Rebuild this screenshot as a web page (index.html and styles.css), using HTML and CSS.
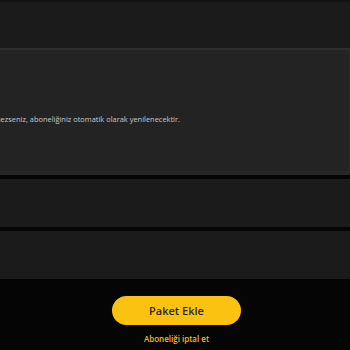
FILE: index.html
```html
<!DOCTYPE html>
<html lang="tr">
<head>
<meta charset="utf-8">
<link rel="stylesheet" href="styles.css">
</head>
<body>
<div class="page">
  <div class="top"></div>
  <div class="card">
    <div class="note-wrap">
      <p class="note">Eğer aboneliğinizi iptal etmezseniz, aboneliğiniz otomatik olarak yenilenecektir.</p>
    </div>
  </div>
  <div class="row"></div>
  <div class="row"></div>
  <div class="actions">
    <button class="primary">Paket Ekle</button>
    <a class="cancel">Aboneliği iptal et</a>
  </div>
</div>
</body>
</html>
```

FILE: styles.css
```css
html, body {
  margin: 0;
  padding: 0;
  background: #050505;
  font-family: "Open Sans", "Noto Sans", sans-serif;
  overflow: hidden;
}
.page {
  width: 350px;
  height: 350px;
  display: flex;
  flex-direction: column;
}
.top {
  height: 46px;
  background: #1b1b1b;
  border-top: 2px solid #131313;
}
.card {
  height: 57px;
  background: #232323;
  border-top: 2px solid #2e2e2e;
  border-bottom: 4px solid #272727;
  border-right: 1px solid #2c2c2c;
  padding-top: 64px;
}
.note-wrap {
  width: 180px;
  display: flex;
  justify-content: flex-end;
}
.note {
  margin: 0;
  white-space: nowrap;
  font-size: 7.45px;
  line-height: 11px;
  color: #c9c9c9;
  flex-shrink: 0;
}
.row {
  height: 48px;
  background: #1b1b1b;
  margin-top: 4px;
}
.actions {
  display: flex;
  flex-direction: column;
  align-items: center;
  padding-top: 17px;
  padding-left: 3px;
}
.primary {
  width: 129px;
  height: 29px;
  border: 0;
  border-radius: 15px;
  background: #fcc212;
  color: #262626;
  font-family: "Open Sans", "Noto Sans", sans-serif;
  font-weight: 600;
  font-size: 11px;
  padding: 0;
}
.cancel {
  margin-top: 8px;
  font-size: 8px;
  font-weight: 600;
  line-height: 12px;
  color: #f0bd12;
}
```
